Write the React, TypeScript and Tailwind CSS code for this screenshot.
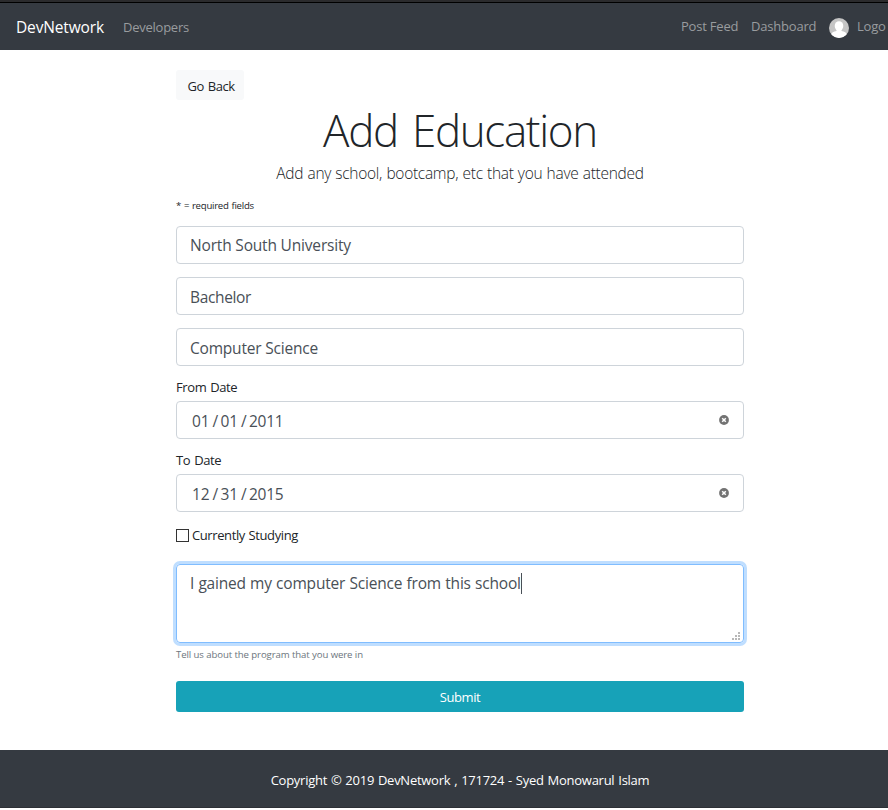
import type { ReactNode } from "react";

function TextField({ value, className }: { value: string; className: string }) {
  return (
    <div className="h-[38px] rounded border border-[#ced4da] px-[13px] text-[15.5px] leading-[37px] text-[#495057]">
      <span className={className}>{value}</span>
    </div>
  );
}

function DateField({ parts }: { parts: string[] }) {
  return (
    <div className="flex h-[38px] items-center rounded border border-[#ced4da] pr-[14px] pl-[15px] text-[15.5px] leading-[38px] text-[#495057]">
      <span className="w-[18px] pt-0.5">{parts[0]}</span>
      <span className="w-[10.5px] pt-0.5 text-center">/</span>
      <span className="w-[18px] pt-0.5">{parts[1]}</span>
      <span className="w-[10.5px] pt-0.5 text-center">/</span>
      <span className="pt-0.5 tracking-[-0.3px]">{parts[2]}</span>
      <svg className="ml-auto" width="10" height="10" viewBox="0 0 10 10">
        <circle cx="5" cy="5" r="4.9" fill="#737373" />
        <path d="M3.2 3.2l3.6 3.6M6.8 3.2l-3.6 3.6" stroke="#fff" strokeWidth="1.5" />
      </svg>
    </div>
  );
}

function Label({ children }: { children: ReactNode }) {
  return <div className="h-[22px] text-[13px] leading-4 tracking-[-0.4px] [word-spacing:1px] text-[#212529]">{children}</div>;
}

function Avatar() {
  return (
    <svg className="mt-[3px] shrink-0" width="20" height="20" viewBox="0 0 20 20">
      <clipPath id="avatar">
        <circle cx="10" cy="10" r="10" />
      </clipPath>
      <g clipPath="url(#avatar)">
        <rect width="20" height="20" fill="#c5c5c5" />
        <ellipse cx="10" cy="8" rx="4.3" ry="4.8" fill="#fff" />
        <path d="M7.5 10h5v3c3 .6 5.200 1.700 5.500 4v3H2v-3c.3-2.300 2.500-3.400 5.500-4z" fill="#fff" />
      </g>
    </svg>
  );
}

export default function App() {
  return (
    <div className="flex h-[810px] w-[888px] flex-col overflow-hidden bg-white font-['Open_Sans','Noto_Sans',sans-serif] whitespace-nowrap text-[#212529]">
      <div className="h-[3px] shrink-0 border-b border-black bg-[#2b2b2d]" />
      <nav className="flex h-[47px] shrink-0 items-center overflow-hidden bg-[#353a41] pl-4 text-[13px] text-[#999c9f]">
        <div className="w-[107px] shrink-0 pt-0.5 text-[15.5px] tracking-[-0.15px] text-white">DevNetwork</div>
        <div className="w-[558px] shrink-0 pt-0.5 tracking-[-0.25px]">Developers</div>
        <div className="w-[70px] shrink-0 tracking-[-0.2px]">Post Feed</div>
        <div className="w-[78px] shrink-0 tracking-[-0.2px]">Dashboard</div>
        <Avatar />
        <div className="ml-2 shrink-0 tracking-[-0.2px]">Logo</div>
      </nav>

      <main className="mx-auto mt-5 ml-[176px] h-[680px] w-[568px]">
        <button className="block h-[30px] w-[68px] rounded-[3px] bg-[#f8f9fa] pt-[3px] pl-[2px] text-center text-[13px] tracking-[-0.45px] [word-spacing:1px]">Go Back</button>
        <h1 className="h-[60px] text-center text-[44px] leading-[60px] font-light tracking-[-1.35px] [word-spacing:4px]">Add Education</h1>
        <p className="h-7 text-center text-[15.5px] leading-[27px] font-light tracking-[-0.28px] [word-spacing:0.5px]">Add any school, bootcamp, etc that you have attended</p>
        <div className="mb-[11px] h-[27px] pt-[10px] text-[9.6px] leading-4 tracking-[-0.25px] [word-spacing:0.6px]">* = required fields</div>
        <div className="flex flex-col gap-[13px]">
          <TextField value="North South University" className="tracking-[-0.18px]" />
          <TextField value="Bachelor" className="relative top-px tracking-[-0.35px]" />
          <TextField value="Computer Science" className="relative top-px tracking-[-0.2px]" />
        </div>
        <div className="mt-[13px]">
          <Label>From Date</Label>
          <DateField parts={["01", "01", "2011"]} />
        </div>
        <div className="mt-[13px]">
          <Label>To Date</Label>
          <DateField parts={["12", "31", "2015"]} />
        </div>
        <label className="mt-[13px] flex h-[21px] items-center gap-[3px] text-[13px] tracking-[-0.4px] [word-spacing:0.7px]">
          <span className="h-[13px] w-[13px] border border-[#333]" />
          <span>Currently Studying</span>
        </label>
        <div className="relative mt-[18px] flex h-[79px] items-start rounded border border-[#80bdff] pt-[5px] pl-[13px] text-[15.5px] leading-[27px] text-[#495057] shadow-[0_0_0_3px_#bfdeff]">
          <span className="tracking-[-0.19px] [word-spacing:0.4px]">I gained my computer Science from this school</span>
          <span className="mt-[3px] h-[21px] w-px bg-[#495057]" />
          <svg className="absolute right-[3px] bottom-[2px]" width="8" height="8" fill="#b8b8b8" shapeRendering="crispEdges">
            <path d="M6 0h2v2H6zM3 3h2v2H3zM6 3h2v2H6zM0 6h2v2H0zM3 6h2v2H3zM6 6h2v2H6z" />
          </svg>
        </div>
        <div className="mt-1 h-[34px] text-[9.6px] leading-4 tracking-[-0.09px] text-[#6c757d]">Tell us about the program that you were in</div>
        <button className="block h-[31px] w-full rounded-[3px] bg-[#17a2b8] pt-0.5 text-center text-[13px] tracking-[-0.4px] text-white">Submit</button>
      </main>
      <footer className="flex h-[58px] shrink-0 justify-center border-b border-[#2d3036] bg-[#353a41] pt-5 pl-8 text-[13px] leading-5 tracking-[-0.26px] [word-spacing:0.75px] text-white">
        Copyright © 2019 DevNetwork , 171724 - Syed Monowarul Islam
      </footer>
    </div>
  );
}
